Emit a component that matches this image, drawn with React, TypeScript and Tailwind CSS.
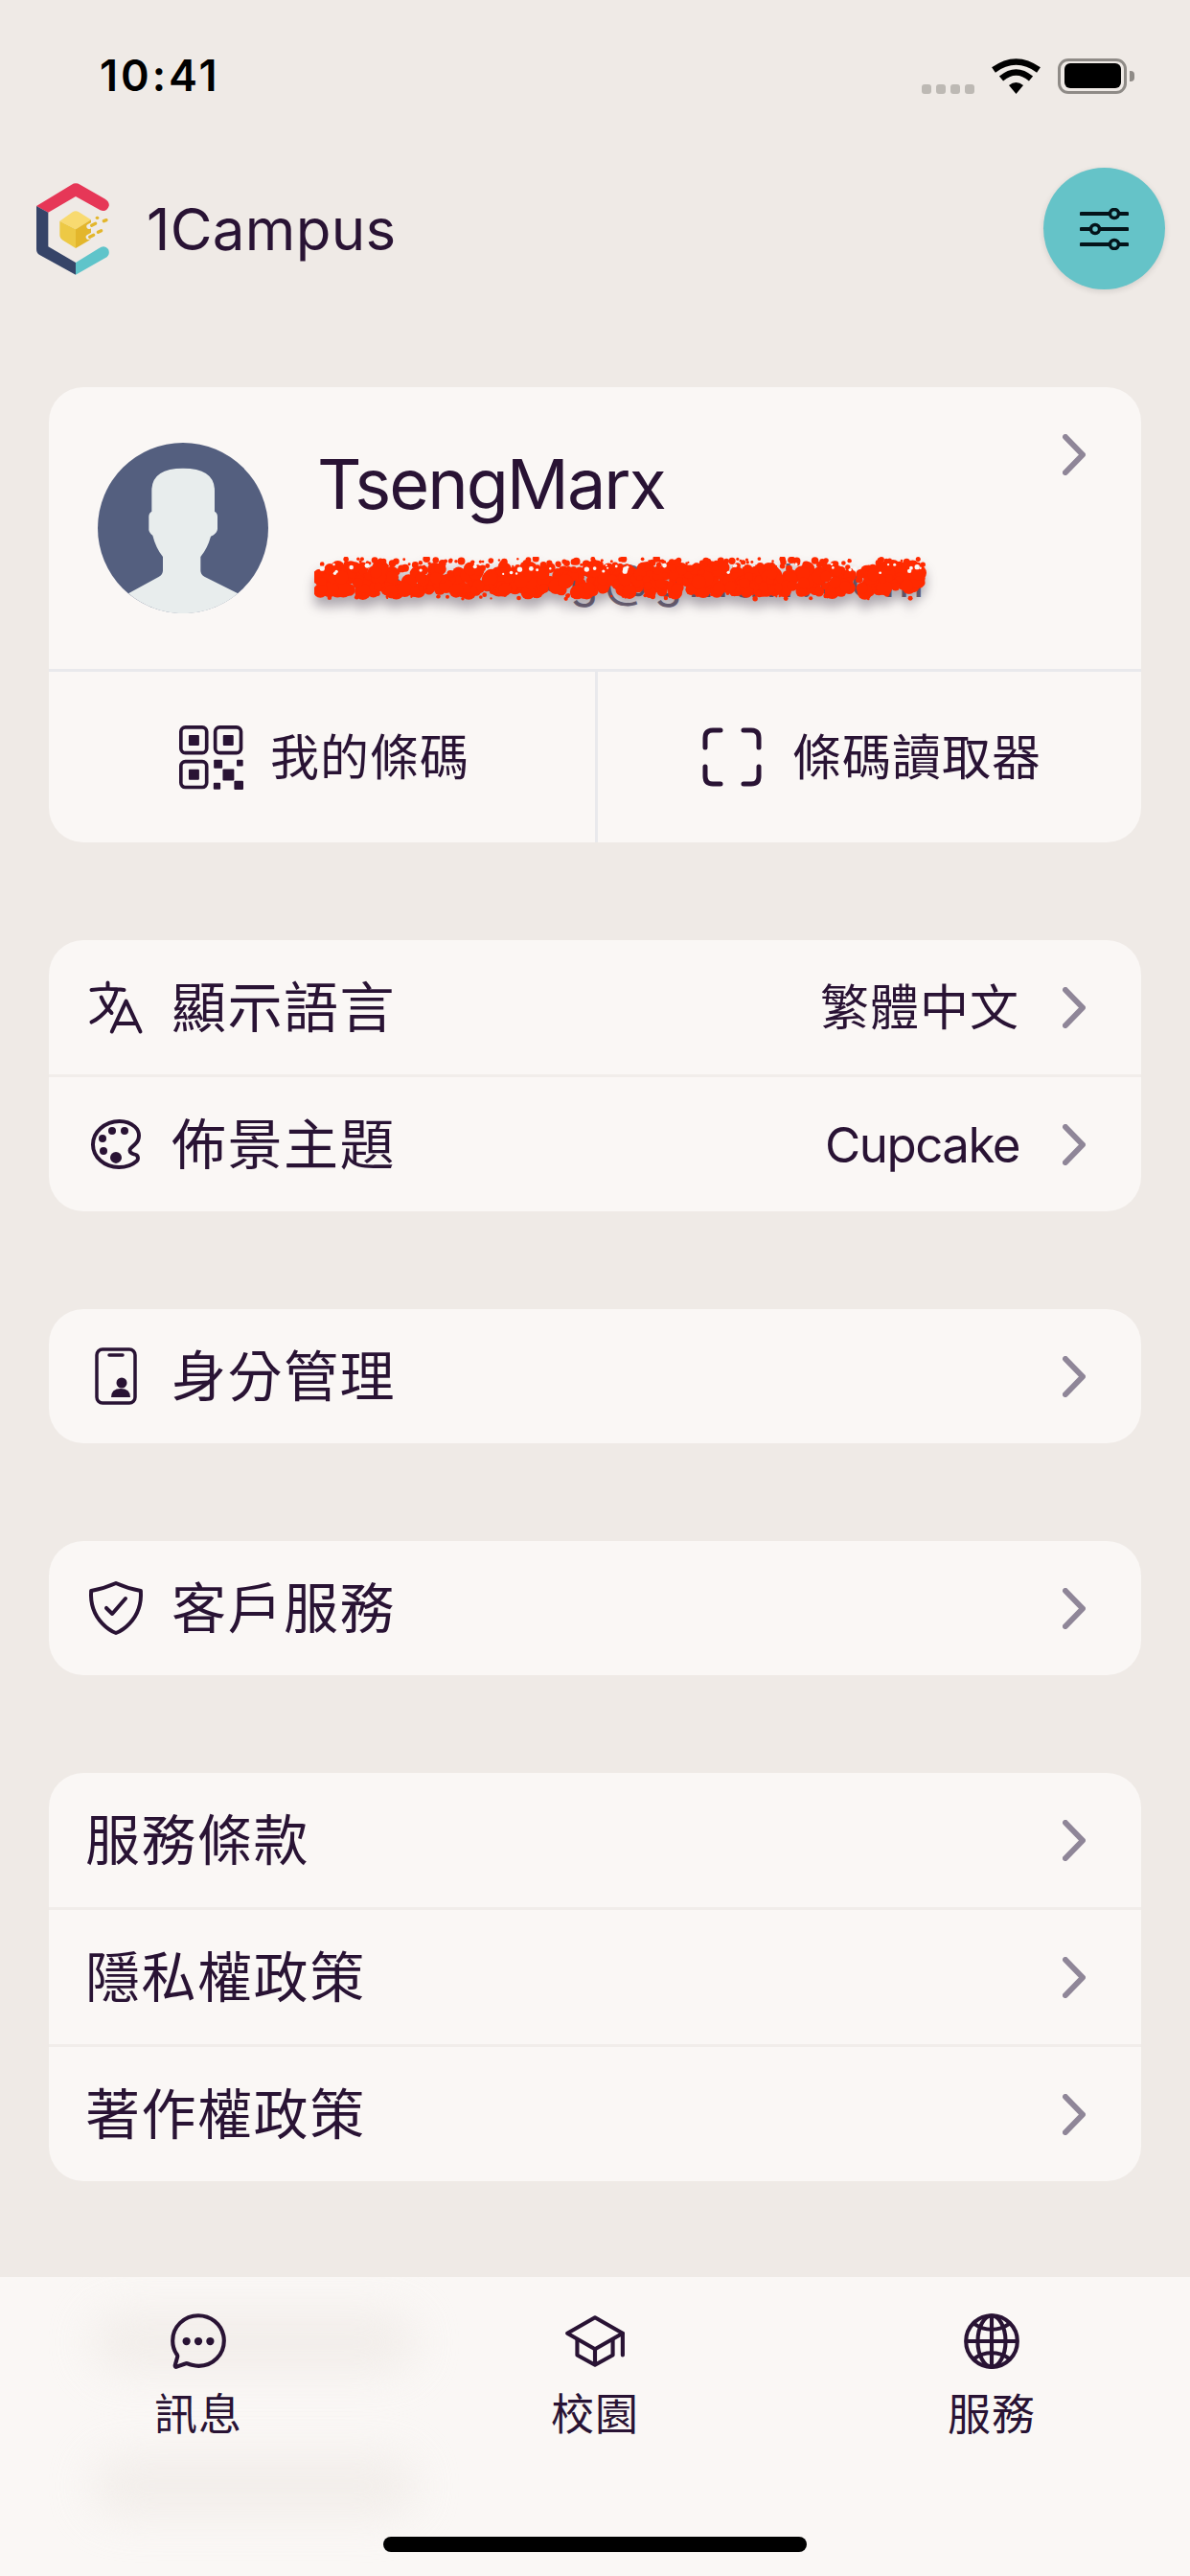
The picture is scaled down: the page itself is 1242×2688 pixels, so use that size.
import { ReactNode, useMemo } from 'react'
import {
  IoColorPaletteOutline,
  IoShieldCheckmarkOutline,
  IoChatbubbleEllipsesOutline,
  IoSchoolOutline,
  IoGlobeOutline,
} from 'react-icons/io5'
import { HiOutlineLanguage } from 'react-icons/hi2'

function Chevron() {
  return (
    <svg width="24" height="43" viewBox="0 0 24 43" fill="none" className="shrink-0">
      <path d="M3 3 L21 21.5 L3 40" stroke="#8f8698" strokeWidth="6" strokeLinecap="round" strokeLinejoin="round" />
    </svg>
  )
}

function Logo() {
  return (
    <svg width="76" height="97" viewBox="55 60 228 291">
      <path d="M55 135 L165 68 Q178 60 192 68 L268 112 Q285 122 282 135 Q275 155 255 148 L178 105 L92 155 Z" fill="#e63757" />
      <path d="M55 135 L92 155 V262 L178 312 V350 L65 288 Q55 282 55 270 Z" fill="#364468" />
      <path d="M178 312 L250 268 Q268 255 280 270 Q288 288 270 298 L178 350 Z" fill="#5fc4ca" />
      <path d="M128 182 L168 154 Q178 147 188 154 L226 178 L178 208 Z" fill="#f8da70" />
      <path d="M128 182 L178 208 V267 L138 242 Q128 236 128 226 Z" fill="#edc945" />
      <path d="M178 208 L226 178 V235 Q226 240 218 244 L178 267 Z" fill="#e3b62c" />
      <g stroke="#e3b62c" strokeWidth="10" strokeLinecap="round">
        <path d="M220 199 L250 184" stroke="#efece8" strokeWidth="16" />
        <path d="M218 232 L232 225" stroke="#efece8" strokeWidth="16" />
        <path d="M245 172 L246 172" />
        <path d="M266 182 L274 179" />
        <path d="M228 196 L240 190" />
        <path d="M248 217 L258 212" />
        <path d="M222 232 L234 226" />
      </g>
    </svg>
  )
}

function Wifi() {
  return (
    <svg width="51" height="38" viewBox="0 0 51 38" fill="none" className="shrink-0">
      <path d="M2 13 Q25.5 -4 49 13" stroke="#000" strokeWidth="6.5" />
      <path d="M10 22 Q25.5 9 41 22" stroke="#000" strokeWidth="6.5" />
      <path d="M25.5 38 L18 29 Q25.5 23 33 29 Z" fill="#000" />
    </svg>
  )
}

function Battery() {
  return (
    <div className="flex items-center gap-[3px]">
      <div className="flex h-[37px] w-[72px] items-center justify-center rounded-[11px] border-[3px] border-[#8f8b87]">
        <div className="h-[26px] w-[59px] rounded-[6px] bg-black" />
      </div>
      <div className="h-[11px] w-[5px] rounded-r-[4px] bg-[#8f8b87]" />
    </div>
  )
}

function FilterIcon() {
  return (
    <svg width="51" height="44" viewBox="0 0 51 44" fill="none" stroke="#04141a" strokeLinecap="round">
      <path d="M1.5 6 H49.5 M1.5 22 H49.5 M1.5 38 H49.5" strokeWidth="4" />
      <circle cx="36" cy="6" r="4.5" strokeWidth="3.5" fill="#65c3c8" />
      <circle cx="16" cy="22" r="4.5" strokeWidth="3.5" fill="#65c3c8" />
      <circle cx="36" cy="38" r="4.5" strokeWidth="3.5" fill="#65c3c8" />
    </svg>
  )
}

function Avatar() {
  return (
    <svg width="178" height="178" viewBox="66 65 534 534" className="shrink-0">
      <circle cx="333" cy="332" r="267" fill="#545f7f" />
      <path
        d="M235 215 Q235 145 333 145 Q432 145 432 215 V280 Q442 285 441 300 V335 Q440 350 420 358 Q410 395 388 422 V465 Q388 478 400 484 L505 537 A267 267 0 0 1 162 537 L258 484 Q270 478 270 465 V422 Q248 395 238 355 Q225 345 226 335 V300 Q225 285 235 280 Z"
        fill="#e8eded"
      />
    </svg>
  )
}

function QrIcon() {
  return (
    <svg width="67" height="67" viewBox="108 78 202 202" className="shrink-0" fill="#291334">
      {[
        [108, 78],
        [216, 78],
        [108, 186],
      ].map(([x, y]) => (
        <g key={`${x}-${y}`}>
          <rect x={x + 5.5} y={y + 5.5} width="81" height="81" rx="14" fill="none" stroke="#291334" strokeWidth="11" />
          <rect x={x + 30} y={y + 30} width="33" height="33" rx="3" />
        </g>
      ))}
      <rect x="217" y="186" width="27" height="27" rx="3" />
      <rect x="289" y="186" width="20" height="20" rx="3" />
      <rect x="245" y="215" width="36" height="36" rx="3" />
      <rect x="216" y="258" width="22" height="21" rx="3" />
      <rect x="281" y="252" width="29" height="28" rx="3" />
    </svg>
  )
}

function ScanIcon() {
  return (
    <svg width="62" height="62" viewBox="0 0 62 62" fill="none" stroke="#291334" strokeWidth="5" strokeLinecap="round" className="shrink-0">
      <path d="M3 21 V11 Q3 3 11 3 H19" />
      <path d="M43 3 H51 Q59 3 59 11 V21" />
      <path d="M59 41 V51 Q59 59 51 59 H43" />
      <path d="M19 59 H11 Q3 59 3 51 V41" />
    </svg>
  )
}

function IdIcon() {
  return (
    <svg width="44" height="60" viewBox="0 0 44 60" fill="none">
      <rect x="2" y="2" width="40" height="56" rx="6" stroke="#291334" strokeWidth="3.5" />
      <path d="M15 8 H29" stroke="#291334" strokeWidth="3.5" strokeLinecap="round" />
      <circle cx="28" cy="37" r="5.5" fill="#291334" />
      <path d="M18 53 Q18 44 28 44 Q38 44 38 53 Z" fill="#291334" transform="translate(-1 -1)" />
    </svg>
  )
}

// seeded noise so the scribble over the address stays the same between runs
function Scribble() {
  const { blobs, holes } = useMemo(() => {
    let seed = 41
    const rand = () => {
      seed = (seed * 16807) % 2147483647
      return seed / 2147483647
    }
    const blobs: { x: number; y: number; r: number }[] = []
    const holes: { x: number; y: number; r: number }[] = []
    for (let i = 0; i < 620; i++) {
      blobs.push({ x: 6 + rand() * 628, y: 11 + rand() * 26, r: 3 + rand() * 5.5 })
    }
    for (let i = 0; i < 170; i++) {
      blobs.push({ x: 4 + rand() * 632, y: 2 + rand() * 9, r: 1 + rand() * 3 })
    }
    for (let i = 0; i < 60; i++) {
      blobs.push({ x: 4 + rand() * 632, y: 38 + rand() * 6, r: 0.8 + rand() * 2 })
    }
    for (let i = 0; i < 45; i++) {
      holes.push({ x: 6 + rand() * 628, y: 7 + rand() * 11, r: 1 + rand() * 1.8 })
    }
    return { blobs, holes }
  }, [])
  return (
    <svg
      width="642"
      height="48"
      viewBox="0 0 642 48"
      className="absolute left-[-3px] top-[5px] drop-shadow-[0_9px_6px_rgba(60,50,70,0.4)]"
    >
      {blobs.map((b, i) => (
        <circle key={i} cx={b.x} cy={b.y} r={b.r} fill="#ff2a00" />
      ))}
      {holes.map((b, i) => (
        <circle key={i} cx={b.x} cy={b.y} r={b.r} fill="#faf7f5" />
      ))}
    </svg>
  )
}

function Row({ icon, label, value, divider }: { icon?: ReactNode; label: string; value?: string; divider?: boolean }) {
  return (
    <div className={`flex h-[140px] items-center pr-[58px] ${divider ? 'box-content border-t-[3px] border-[#f1edea]' : ''} ${icon ? 'pl-[30px]' : 'pl-[38px]'}`}>
      {icon && <div className="mr-[18px] flex w-[80px] shrink-0 items-center justify-center">{icon}</div>}
      <span className="text-[57px] leading-none tracking-[1.5px]">{label}</span>
      {value && <span className={`ml-auto mr-[45px] text-[51px] leading-none ${value === 'Cupcake' ? 'tracking-[-1.5px]' : 'tracking-[1px]'}`}>{value}</span>}
      {!value && <span className="ml-auto" />}
      <Chevron />
    </div>
  )
}

function Tab({ icon, label }: { icon: ReactNode; label: string }) {
  return (
    <div className="flex flex-1 flex-col items-center">
      <div className="flex h-[66px] items-center justify-center">{icon}</div>
      <span className="mt-[19px] text-[45px] leading-[50px] tracking-[1px]">{label}</span>
    </div>
  )
}

export default function App() {
  return (
    <div className="relative flex h-[2688px] w-[1242px] flex-col overflow-hidden bg-[#efeae6] font-['Inter','Noto_Sans_CJK_TC',sans-serif] text-[#291334]">
      {/* status bar */}
      <div className="flex h-[175px] items-start pl-[104px] pr-[58px] pt-[60px] text-black">
        <span className="text-[45px] font-semibold leading-[38px] tracking-[3px]">10:41</span>
        <div className="ml-auto flex items-center">
          <div className="mr-[18px] mt-[28px] flex gap-[5px]">
            <div className="h-[10px] w-[10px] rounded-[3px] bg-[#bdb9b4]" />
            <div className="h-[10px] w-[10px] rounded-[3px] bg-[#bdb9b4]" />
            <div className="h-[10px] w-[10px] rounded-[3px] bg-[#bdb9b4]" />
            <div className="h-[10px] w-[10px] rounded-[3px] bg-[#bdb9b4]" />
          </div>
          <Wifi />
          <div className="ml-[18px]">
            <Battery />
          </div>
        </div>
      </div>

      {/* header */}
      <div className="flex h-[127px] items-center pl-[38px] pr-[26px]">
        <Logo />
        <span className="ml-[39px] text-[60px] leading-none tracking-[0.3px]">1Campus</span>
        <div className="ml-auto flex h-[127px] w-[127px] items-center justify-center rounded-full bg-[#65c3c8] shadow-[0_2px_6px_rgba(0,0,0,0.12)]">
          <FilterIcon />
        </div>
      </div>

      <main className="flex flex-1 flex-col gap-[102px] px-[51px] pt-[102px]">
        <div className="overflow-hidden rounded-[36px] bg-[#faf7f5]">
          <div className="flex h-[294px] items-start pl-[51px] pr-[58px] pt-[58px]">
            <Avatar />
            <div className="ml-[51px] flex flex-col pt-[7px]">
              <span className="text-[72px] leading-[72px] tracking-[-2px]">TsengMarx</span>
              <div className="relative mt-[35px] h-[60px] w-[636px]">
                <span className="whitespace-nowrap text-[48px] leading-[60px] tracking-[6px] text-[#6f6678]">••••••••g@gmail.com</span>
                <Scribble />
              </div>
            </div>
            <div className="ml-auto -mt-[9px]">
              <Chevron />
            </div>
          </div>
          <div className="box-content flex h-[178px] border-t-[3px] border-[#e9e9ec]">
            <div className="flex w-[573px] shrink-0 items-center justify-center gap-[28px] border-r-[3px] border-[#e9e9ec] pl-[5px]">
              <QrIcon />
              <span className="text-[51px] leading-none tracking-[1px]">我的條碼</span>
            </div>
            <div className="flex flex-1 items-center justify-center gap-[32px] pl-[5px]">
              <ScanIcon />
              <span className="text-[51px] leading-none tracking-[1px]">條碼讀取器</span>
            </div>
          </div>
        </div>

        <div className="overflow-hidden rounded-[36px] bg-[#faf7f5]">
          <Row icon={<HiOutlineLanguage size={68} strokeWidth={1.4} />} label="顯示語言" value="繁體中文" />
          <Row icon={<IoColorPaletteOutline size={64} />} label="佈景主題" value="Cupcake" divider />
        </div>

        <div className="overflow-hidden rounded-[36px] bg-[#faf7f5]">
          <Row icon={<IdIcon />} label="身分管理" />
        </div>

        <div className="overflow-hidden rounded-[36px] bg-[#faf7f5]">
          <Row icon={<IoShieldCheckmarkOutline size={64} />} label="客戶服務" />
        </div>

        <div className="overflow-hidden rounded-[36px] bg-[#faf7f5]">
          <Row label="服務條款" />
          <Row label="隱私權政策" divider />
          <Row label="著作權政策" divider />
        </div>
      </main>

      {/* tab bar */}
      <div className="relative h-[312px] shrink-0 overflow-hidden bg-[#faf7f5] pt-[34px]">
        <div className="absolute left-[95px] top-[36px] h-[64px] w-[340px] rounded-full bg-[#efeae6] opacity-70 blur-[22px]" />
        <div className="absolute left-[95px] top-[186px] h-[64px] w-[340px] rounded-full bg-[#efeae6] opacity-70 blur-[22px]" />
        <div className="relative flex">
          <Tab icon={<IoChatbubbleEllipsesOutline size={66} />} label="訊息" />
          <Tab icon={<IoSchoolOutline size={66} />} label="校園" />
          <Tab icon={<IoGlobeOutline size={66} />} label="服務" />
        </div>
        <div className="absolute bottom-[25px] left-[400px] h-[16px] w-[442px] rounded-full bg-black" />
      </div>
    </div>
  )
}
